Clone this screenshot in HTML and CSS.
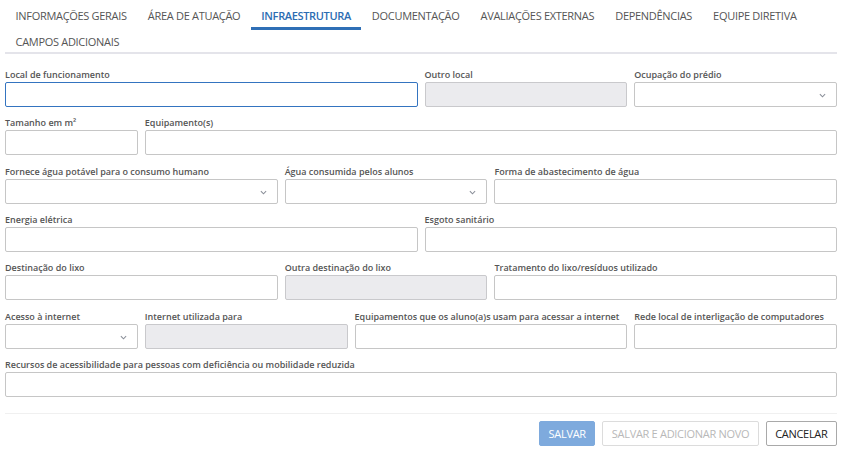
FILE: index.html
```html
<!DOCTYPE html>
<html lang="pt-BR">
<head>
<meta charset="utf-8">
<title>Infraestrutura</title>
<link rel="stylesheet" href="styles.css">
</head>
<body>
<div class="page">
  <ul class="tabs">
    <li class="tab">INFORMAÇÕES GERAIS</li>
    <li class="tab">ÁREA DE ATUAÇÃO</li>
    <li class="tab active">INFRAESTRUTURA</li>
    <li class="tab">DOCUMENTAÇÃO</li>
    <li class="tab">AVALIAÇÕES EXTERNAS</li>
    <li class="tab">DEPENDÊNCIAS</li>
    <li class="tab">EQUIPE DIRETIVA</li>
    <li class="tab">CAMPOS ADICIONAIS</li>
  </ul>

  <form class="form">
    <div class="field s6"><label>Local de funcionamento</label><div class="input focus"></div></div>
    <div class="field s3"><label>Outro local</label><div class="input disabled"></div></div>
    <div class="field s3"><label>Ocupação do prédio</label><div class="input select"><svg class="chev" viewBox="0 0 8 5"><path d="M1 1l3 3 3-3"/></svg></div></div>

    <div class="field s2"><label>Tamanho em m²</label><div class="input"></div></div>
    <div class="field s10"><label>Equipamento(s)</label><div class="input"></div></div>

    <div class="field s4"><label>Fornece água potável para o consumo humano</label><div class="input select"><svg class="chev" viewBox="0 0 8 5"><path d="M1 1l3 3 3-3"/></svg></div></div>
    <div class="field s3"><label>Água consumida pelos alunos</label><div class="input select"><svg class="chev" viewBox="0 0 8 5"><path d="M1 1l3 3 3-3"/></svg></div></div>
    <div class="field s5"><label>Forma de abastecimento de água</label><div class="input"></div></div>

    <div class="field s6"><label>Energia elétrica</label><div class="input"></div></div>
    <div class="field s6"><label>Esgoto sanitário</label><div class="input"></div></div>

    <div class="field s4"><label>Destinação do lixo</label><div class="input"></div></div>
    <div class="field s3"><label>Outra destinação do lixo</label><div class="input disabled"></div></div>
    <div class="field s5"><label>Tratamento do lixo/resíduos utilizado</label><div class="input"></div></div>

    <div class="field s2"><label>Acesso à internet</label><div class="input select"><svg class="chev" viewBox="0 0 8 5"><path d="M1 1l3 3 3-3"/></svg></div></div>
    <div class="field s3"><label>Internet utilizada para</label><div class="input disabled"></div></div>
    <div class="field s4"><label>Equipamentos que os aluno(a)s usam para acessar a internet</label><div class="input"></div></div>
    <div class="field s3"><label>Rede local de interligação de computadores</label><div class="input"></div></div>

    <div class="field s12"><label>Recursos de acessibilidade para pessoas com deficiência ou mobilidade reduzida</label><div class="input"></div></div>
  </form>

  <div class="actions">
    <button class="btn primary" type="button">SALVAR</button>
    <button class="btn ghost" type="button">SALVAR E ADICIONAR NOVO</button>
    <button class="btn default" type="button">CANCELAR</button>
  </div>
</div>
</body>
</html>
```

FILE: styles.css
```css
* { box-sizing: border-box; }
html, body { margin: 0; padding: 0; background: #fff; }
body {
  font-family: "Open Sans", "Liberation Sans", Arial, sans-serif;
  color: #555;
}
.page { padding: 0 8px 0 5px; }

.tabs {
  list-style: none;
  margin: 0;
  padding: 4px 0 0 0;
  display: flex;
  flex-wrap: wrap;
  border-bottom: 2px solid #e4e4ea;
  height: 54px;
}
.tab {
  height: 26px;
  line-height: 23px;
  padding: 0 10.5px;
  font-size: 11px;
  color: #555;
  letter-spacing: -0.3px;
  border-bottom: 3px solid transparent;
  white-space: nowrap;
}
.tab.active {
  color: #2c6db3;
  font-weight: 600;
  border-bottom-color: #2f6fb6;
  letter-spacing: -0.35px;
}

.form {
  display: grid;
  grid-template-columns: repeat(12, 1fr);
  column-gap: 7px;
  row-gap: 9.35px;
  margin-top: 14px;
}
.field { display: flex; flex-direction: column; min-width: 0; }
.s2 { grid-column: span 2; }
.s3 { grid-column: span 3; }
.s4 { grid-column: span 4; }
.s5 { grid-column: span 5; }
.s6 { grid-column: span 6; }
.s10 { grid-column: span 10; }
.s12 { grid-column: span 12; }

label {
  font-size: 9px;
  font-weight: 600;
  color: #555;
  line-height: 13px;
  height: 13px;
  margin-bottom: 1px;
  white-space: nowrap;
}
.input {
  height: 25px;
  border: 1px solid #c6c6c6;
  border-radius: 2px;
  background: #fff;
  position: relative;
}
.input.focus { border-color: #3474c0; }
.input.disabled { background: #ebebee; border-color: #c9c9cc; }
.chev {
  position: absolute;
  right: 10px;
  top: 10px;
  width: 7px;
  height: 5px;
  fill: none;
  stroke: #8a8f99;
  stroke-width: 1.2;
}

.actions {
  margin-top: 16px;
  border-top: 1px solid #f0f0f0;
  padding-top: 7px;
  display: flex;
  justify-content: flex-end;
  gap: 7px;
}
.btn {
  height: 25px;
  font-family: "Open Sans", "Liberation Sans", Arial, sans-serif;
  font-size: 11px;
  padding: 0 8.5px;
  border-radius: 2px;
  background: #fff;
  letter-spacing: -0.3px;
  cursor: pointer;
}
.btn.primary { background: #7eaadd; border: 1px solid #7eaadd; color: #fff; }
.btn.ghost { border: 1px solid #dcdcdc; color: #b8b8b8; }
.btn.default { border: 1px solid #a9a9a9; color: #222; }
```
